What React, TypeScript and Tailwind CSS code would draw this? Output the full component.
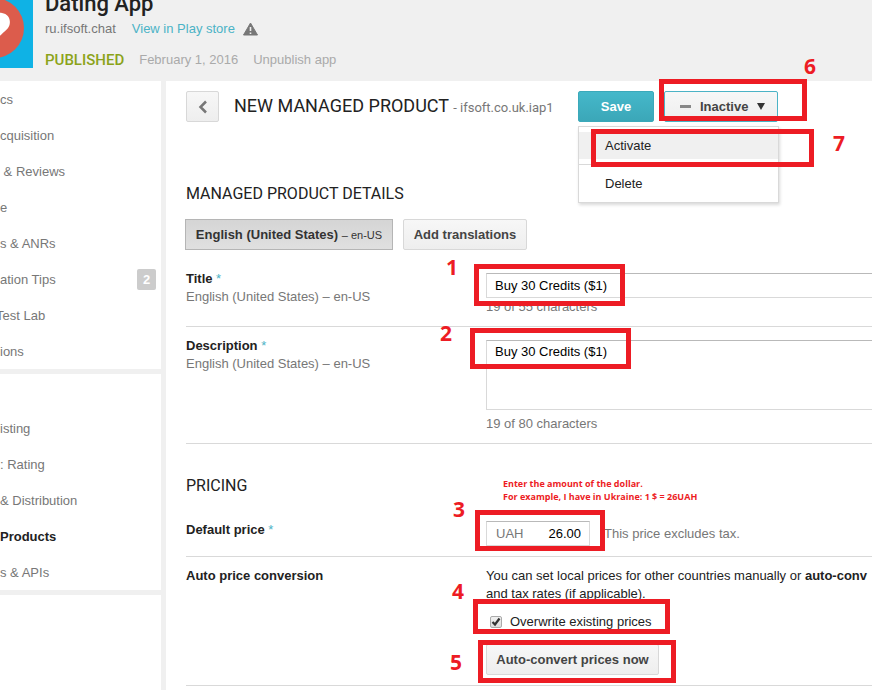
import type { ReactNode } from "react";

const primaryNav = [
  { label: "cs" },
  { label: "cquisition" },
  { label: " & Reviews" },
  { label: "e" },
  { label: "s & ANRs" },
  { label: "ation Tips", badge: 2 },
  { label: "Test Lab", clipped: true },
  { label: "ions" },
];

const secondaryNav = [
  { label: "isting" },
  { label: ": Rating" },
  { label: "& Distribution" },
  { label: "Products", active: true },
  { label: "s & APIs" },
];

type NavEntry = { label: string; badge?: number; clipped?: boolean; active?: boolean };

function NavItem({ label, badge, clipped, active }: NavEntry) {
  return (
    <li>
      <a
        href="#"
        className={
          "flex h-9 items-center justify-between whitespace-pre pt-px pr-[5px] " +
          (active ? "font-bold text-[#222]" : "text-[#777]")
        }
      >
        <span className={clipped ? "-ml-1" : ""}>{label}</span>
        {badge !== undefined && (
          <span className="flex h-[21px] w-[19px] items-center justify-center rounded-xs bg-[#ccc] font-bold text-white">
            {badge}
          </span>
        )}
      </a>
    </li>
  );
}

function Star() {
  return <span className="font-normal text-[#4bb3c6]"> *</span>;
}

function Locale() {
  return <div className="text-[#777]">English (United States) – en-US</div>;
}

const grayButton =
  "h-[31px] shrink-0 whitespace-nowrap rounded-xs border border-[#d8d8d8] bg-linear-to-b from-[#f7f7f7] to-[#eee] font-bold text-[#444]";

function Row({ label, className, children }: { label: ReactNode; className: string; children: ReactNode }) {
  return (
    <div className={"flex border-b border-[#d9d9d9] " + className}>
      <div className="w-[300px] shrink-0">{label}</div>
      <div className="min-w-0 flex-1">{children}</div>
    </div>
  );
}

function Mark({ box, num, n }: { box: string; num: string; n: number }) {
  return (
    <>
      <div className={"absolute border-5 border-[#ed1c24] " + box} />
      <div className={"absolute font-['Open_Sans',sans-serif] text-[21px] leading-6 font-bold text-[#ed1c24] " + num}>{n}</div>
    </>
  );
}

export default function App() {
  return (
    <div className="relative flex h-screen flex-col overflow-hidden bg-white font-['Liberation_Sans',Arial,sans-serif] text-[13px] leading-[18px] text-[#222]">
      <header className="flex h-[81px] shrink-0 bg-[#f0f0f0]">
        <svg className="h-[68px] w-[33px]" viewBox="0 0 33 68" aria-hidden="true">
          <rect width="33" height="68" fill="#0fb2e5" />
          <circle cx="-6" cy="28" r="30" fill="#dc5c4c" />
          <path d="M-8 17 C-6 13 -2 12.500 2 13 C8 14 11 19 9.500 25 C8 30 2 33 -2 38 Z" fill="#fff" />
        </svg>
        <div className="-mt-2 flex flex-col pl-3">
          <div className="font-['Roboto',sans-serif] text-[22px] leading-6 font-medium">Dating App</div>
          <div className="mt-1 flex items-center leading-[18px]">
            <span className="text-[#777]">ru.ifsoft.chat</span>
            <a href="#" className="ml-4 text-[#4bb3c6]">View in Play store</a>
            <svg className="ml-2 h-[14px] w-[15px]" viewBox="0 0 15 14" aria-hidden="true">
              <path d="M7.500 1 L14.500 13 H0.500 Z" fill="#777" stroke="#777" strokeLinejoin="round" />
              <path d="M7.500 5 V9 M7.500 10.500 V12" stroke="#f0f0f0" strokeWidth="1.600" />
            </svg>
          </div>
          <div className="mt-[13px] flex items-center gap-[15px] text-[#aaa]">
            <span className="font-['Roboto',sans-serif] text-[15px] font-medium text-[#8ba31a]">PUBLISHED</span>
            <span>February 1, 2016</span>
            <a href="#">Unpublish app</a>
          </div>
        </div>
      </header>

      <div className="flex min-h-0 flex-1">
        <nav className="w-[166px] shrink-0 overflow-hidden border-r-5 border-[#f0f0f0]">
          <ul className="border-b-5 border-[#f0f0f0]">
            {primaryNav.map((n) => <NavItem key={n.label} {...n} />)}
          </ul>
          <ul className="border-b-5 border-[#f0f0f0] pt-9">
            {secondaryNav.map((n) => <NavItem key={n.label} {...n} />)}
          </ul>
        </nav>

        <main className="min-w-0 flex-1 overflow-hidden pt-[10px] pl-5">
          <div className="flex items-center">
            <button aria-label="Back" className={grayButton + " flex w-[33px] items-center justify-center"}>
              <svg className="h-[14px] w-[10px]" viewBox="0 0 10 14" fill="none" stroke="#777" strokeWidth="2.500" aria-hidden="true">
                <path d="M8 1.500 L2.500 7 L8 12.500" />
              </svg>
            </button>
            <h1 className="w-[359px] pl-[15px] font-['Roboto',sans-serif] text-lg leading-6 whitespace-nowrap">
              NEW MANAGED PRODUCT <span className="text-[13px] text-[#777]">- ifsoft.co.uk.iap1</span>
            </h1>
            <button className="h-[31px] w-[76px] shrink-0 rounded-xs border border-[#3ba9ba] bg-linear-to-b from-[#45b8ca] to-[#3ba7b8] font-bold text-white">
              Save
            </button>
            <div className="relative ml-[10px] shrink-0">
              <button className="flex h-[31px] w-[114px] items-center rounded-xs border border-[#4bb3c6] bg-linear-to-b from-[#f7f7f7] to-[#eee] pl-[15px] font-bold text-[#444]">
                <span className="h-[3px] w-[11px] bg-[#888]" />
                <span className="ml-[9px]">Inactive</span>
                <svg className="ml-[9px] h-[7px] w-2" viewBox="0 0 8 7" aria-hidden="true">
                  <path d="M0 0 H8 L4 7 Z" fill="#333" />
                </svg>
              </button>
              <div role="menu" className="absolute top-[35px] -right-px w-[201px] border border-[#d9d9d9] bg-white shadow-[1px_2px_3px_rgba(0,0,0,0.15)]">
                <button role="menuitem" className="mt-[5px] mb-[5px] block h-[27px] w-full bg-[#f0f0f0] pl-[26px] text-left">Activate</button>
                <button role="menuitem" className="block h-[38px] w-full border-t border-[#d9d9d9] pl-[26px] text-left">Delete</button>
              </div>
            </div>
          </div>

          <h2 className="mt-[63px] font-['Roboto',sans-serif] text-base leading-[18px]">MANAGED PRODUCT DETAILS</h2>
          <div className="mt-4 -ml-px flex gap-[10px]">
            <button className="h-[31px] w-[208px] shrink-0 border border-[#b5b5b5] bg-linear-to-b from-[#d5d5d5] to-[#e0e0e0] font-bold whitespace-nowrap text-[#333]">
              English (United States) <span className="text-[11px] font-normal">– en-US</span>
            </button>
            <button className={grayButton + " w-[124px]"}>Add translations</button>
          </div>

          <Row
            className="h-[77px] pt-5"
            label={<><label htmlFor="title" className="block font-bold">Title<Star /></label><Locale /></>}
          >
            <div className="pt-[3px]">
              <input id="title" defaultValue="Buy 30 Credits ($1)" className="block h-[25px] w-full border border-r-0 border-[#d9d9d9] border-t-[#b9b9b9] pl-2 text-black" />
              <div className="text-[#777]">19 of 55 characters</div>
            </div>
          </Row>
          <Row
            className="h-[117px] pt-[10px]"
            label={<><label htmlFor="description" className="block font-bold">Description<Star /></label><Locale /></>}
          >
            <div className="pt-[3px]">
              <textarea id="description" defaultValue="Buy 30 Credits ($1)" className="block h-[70px] w-full resize-none border border-r-0 border-[#d9d9d9] border-t-[#b9b9b9] pt-[2px] pl-2 text-black" />
              <div className="mt-[5px] text-[#777]">19 of 80 characters</div>
            </div>
          </Row>

          <h2 className="mt-[33px] font-['Roboto',sans-serif] text-base leading-[18px]">PRICING</h2>
          <Row
            className="h-[62px] pt-[26px]"
            label={<label htmlFor="price" className="block font-bold">Default price<Star /></label>}
          >
            <div className="flex items-center gap-[14px] text-[#777]">
              <div className="flex h-[25px] w-[104px] items-center border border-[#d9d9d9] border-t-[#b9b9b9] pr-2 pl-[9px]">
                <span>UAH</span>
                <input id="price" defaultValue="26.00" className="w-full min-w-0 text-right text-black" />
              </div>
              <span>This price excludes tax.</span>
            </div>
          </Row>
          <Row className="h-[129px] pt-[10px]" label={<div className="font-bold">Auto price conversion</div>}>
            <p className="whitespace-nowrap">
              You can set local prices for other countries manually or <b>auto-conv</b>
              <br />
              and tax rates (if applicable).
            </p>
            <label className="mt-[10px] flex items-center gap-2 pl-1">
              <input
                type="checkbox"
                defaultChecked
                className="peer size-3 appearance-none rounded-xs border border-[#aaa] bg-linear-to-b from-[#f0f0f0] to-[#ddd]"
              />
              <svg className="pointer-events-none invisible -ml-5 size-3 peer-checked:visible" viewBox="0 0 12 12" fill="none" stroke="#333" strokeWidth="2.200" aria-hidden="true">
                <path d="M2.500 6 L5 8.500 L9.500 2.500" />
              </svg>
              Overwrite existing prices
            </label>
            <button className={grayButton + " mt-[13px] w-[173px]"}>Auto-convert prices now</button>
          </Row>
        </main>
      </div>

      <div className="pointer-events-none absolute inset-0">
        <Mark n={1} box="left-[474px] top-[264px] h-[42px] w-[151px]" num="left-[446px] top-[255px]" />
        <Mark n={2} box="left-[470px] top-[328px] h-[41px] w-[161px]" num="left-[440px] top-[321px]" />
        <Mark n={3} box="left-[475px] top-[510px] h-[41px] w-[130px]" num="left-[453px] top-[497px]" />
        <Mark n={4} box="left-[473px] top-[599px] h-[35px] w-[197px]" num="left-[452px] top-[579px]" />
        <Mark n={5} box="left-[478px] top-[640px] h-[43px] w-[198px]" num="left-[450px] top-[650px]" />
        <Mark n={6} box="left-[659px] top-[79px] h-[42px] w-[148px]" num="left-[804px] top-[54px]" />
        <Mark n={7} box="left-[591px] top-[129px] h-[38px] w-[223px]" num="left-[833px] top-[131px]" />
        <p className="absolute top-[477px] left-[503px] font-['Open_Sans',sans-serif] text-[9px] leading-[13px] font-bold whitespace-nowrap text-[#ed1c24]">
          Enter the amount of the dollar.
          <br />
          For example, I have in Ukraine: 1 $ = 26UAH
        </p>
      </div>
    </div>
  );
}
